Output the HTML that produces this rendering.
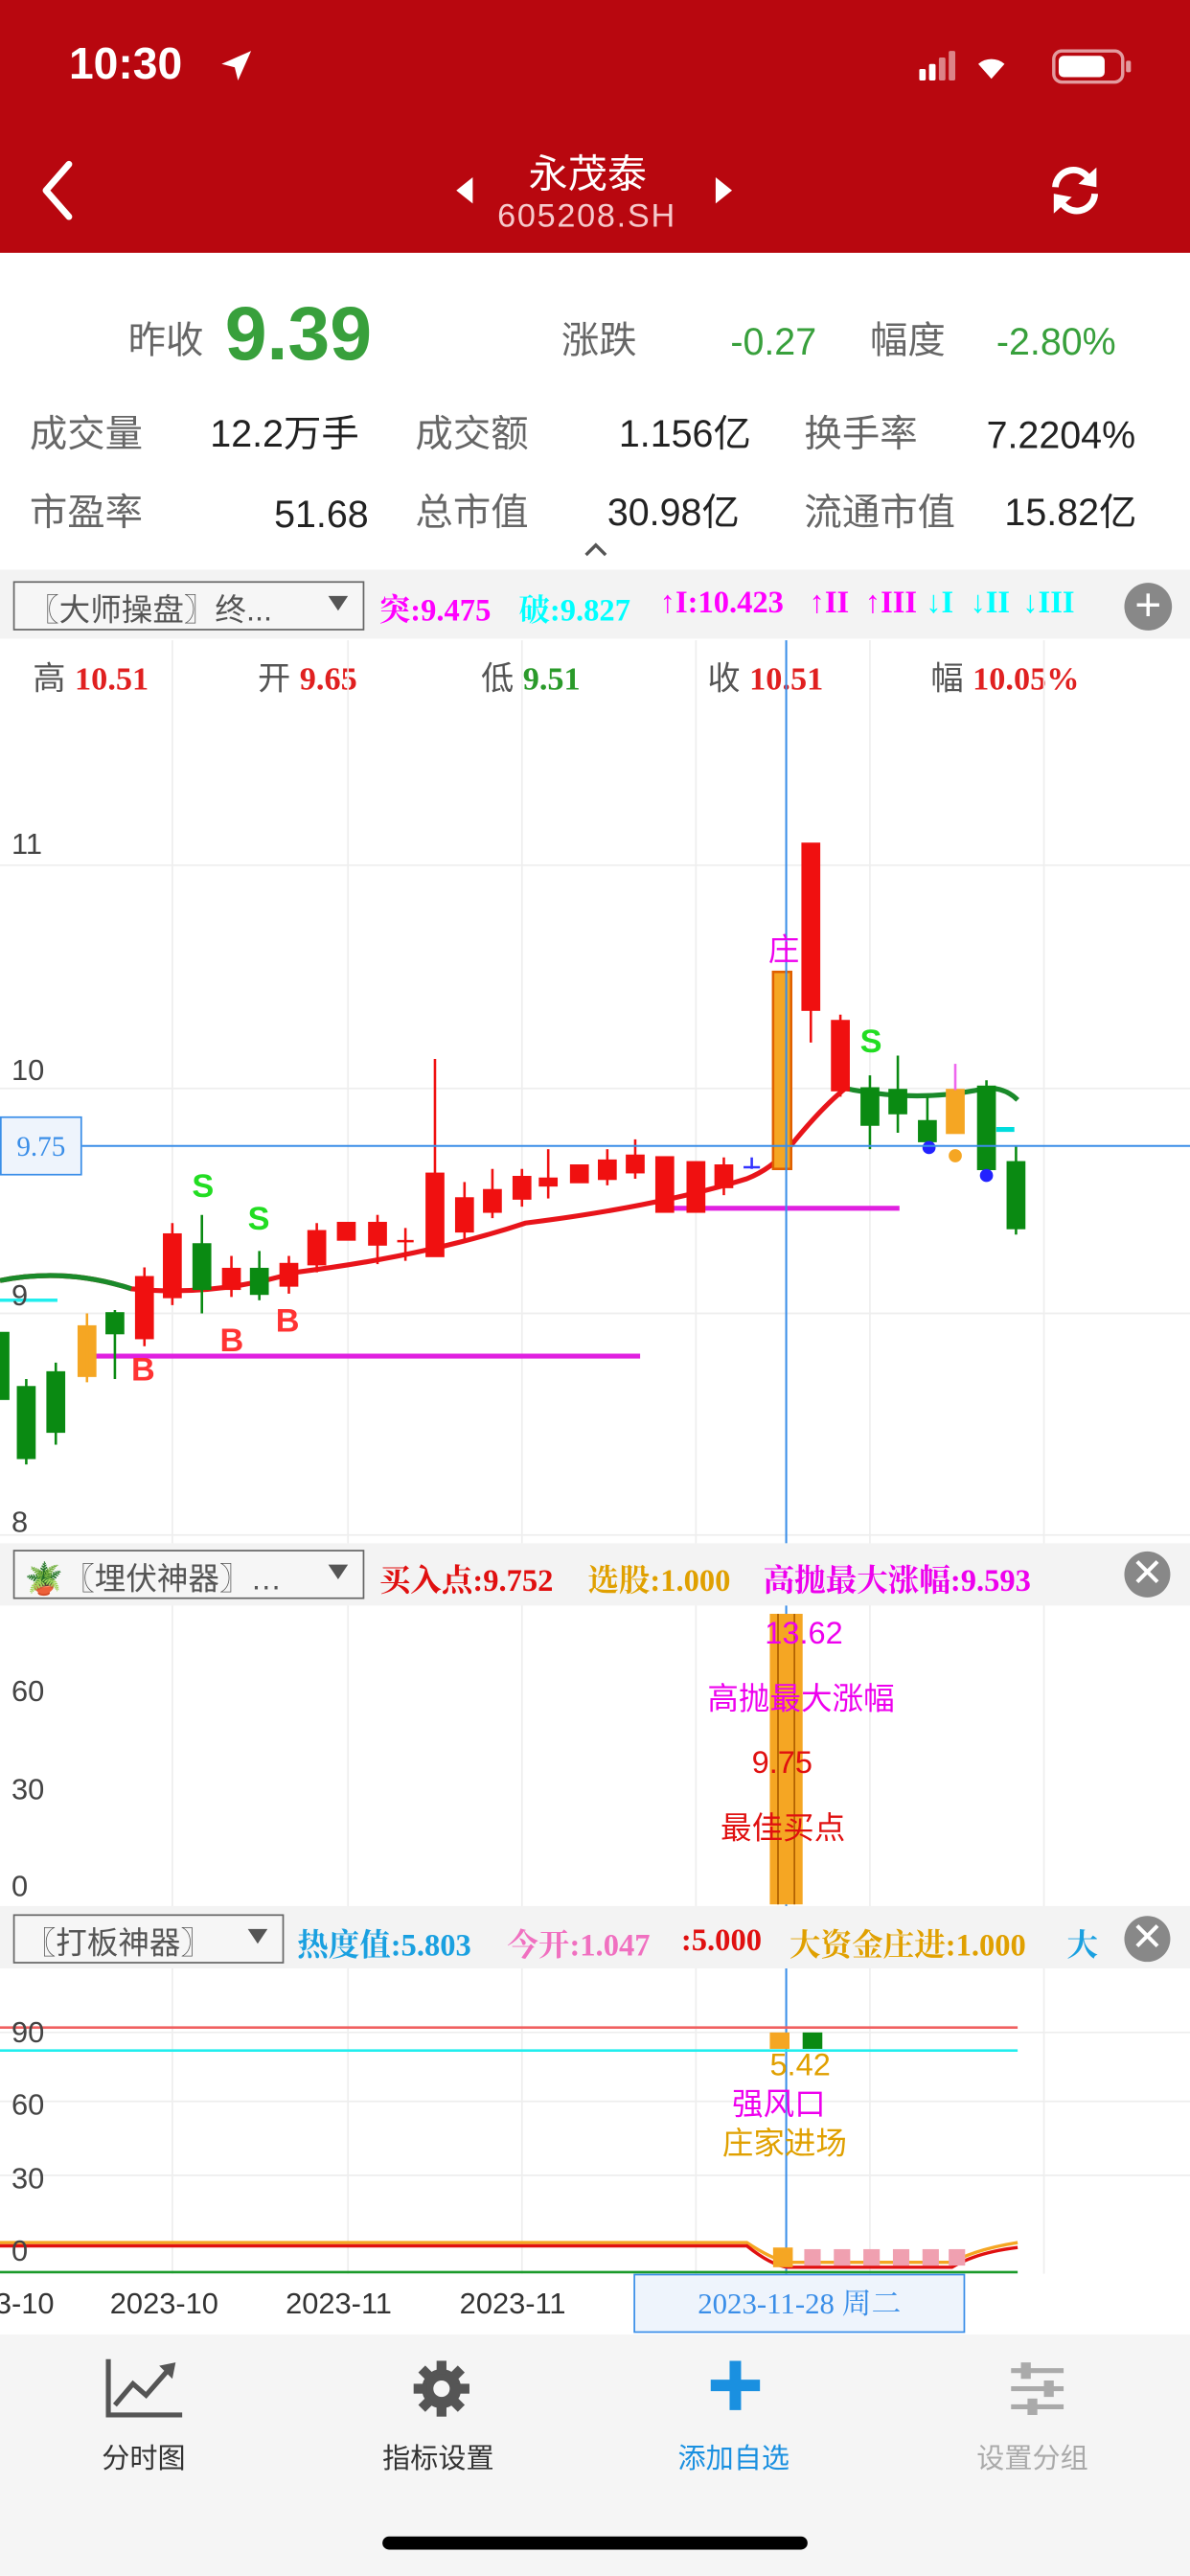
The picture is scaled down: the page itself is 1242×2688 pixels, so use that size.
<!DOCTYPE html>
<html><head><meta charset="utf-8"><style>
*{margin:0;padding:0;box-sizing:border-box}
html,body{width:1242px;height:2688px;overflow:hidden;background:#fff}
#w{position:absolute;left:0;top:0;width:725px;height:1569px;transform:scale(1.71310);transform-origin:0 0;font-family:"Liberation Sans","Noto Sans CJK SC",sans-serif}
.a{position:absolute;white-space:nowrap}
.s{font-family:"Liberation Serif","Noto Serif CJK SC",serif;font-weight:bold}
.g{color:#666}
</style></head><body><div id="w">
<div class="a" style="left:0;top:0;width:725px;height:154px;background:#b8070f"></div>
<div class="a" style="left:42px;top:24px;color:#fff;font-size:27px;font-weight:bold">10:30</div>
<svg class="a" style="left:132px;top:28px" width="24" height="24"><path d="M3 11 L21 3 L13 21 L11 13 Z" fill="#fff"/></svg>
<svg class="a" style="left:560px;top:30px" width="130" height="22"><g fill="#fff"><rect x="0" y="12" width="4" height="7" rx="1"/><rect x="6" y="9" width="4" height="10" rx="1"/><rect x="12" y="5" width="4" height="14" rx="1" opacity=".5"/><rect x="18" y="1" width="4" height="18" rx="1" opacity=".5"/><path d="M44 18 L36 9 A12 12 0 0 1 52 9 Z"/><rect x="82" y="1" width="42" height="19" rx="5" fill="none" stroke="#fff" stroke-width="2" opacity=".6"/><rect x="85" y="4" width="28" height="13" rx="3"/><rect x="126" y="7" width="3" height="7" rx="1" opacity=".6"/></g></svg>
<svg class="a" style="left:20px;top:96px" width="30" height="40"><path d="M22 4 L8 20 L22 36" stroke="#fff" stroke-width="4" fill="none" stroke-linecap="round" stroke-linejoin="round"/></svg>
<div class="a" style="left:322px;top:86px;color:#fff;font-size:24px">永茂泰</div>
<div class="a" style="left:303px;top:121px;color:#f6c9cb;font-size:20px;letter-spacing:1px">605208.SH</div>
<svg class="a" style="left:276px;top:106px" width="14" height="20"><path d="M12 2 L2 10 L12 18Z" fill="#fff"/></svg>
<svg class="a" style="left:434px;top:106px" width="14" height="20"><path d="M2 2 L12 10 L2 18Z" fill="#fff"/></svg>
<svg class="a" style="left:638px;top:100px" width="34" height="32"><g stroke="#fff" stroke-width="4" fill="none"><path d="M5 14 A11 11 0 0 1 26 10"/><path d="M29 18 A11 11 0 0 1 8 22"/></g><path d="M30 2 L30 14 L19 12Z M4 30 L4 18 L15 20Z" fill="#fff"/></svg>

<div class="a g" style="left:78px;top:188px;font-size:23px">昨收</div>
<div class="a" style="left:137px;top:176px;font-size:46px;font-weight:bold;color:#38a03c">9.39</div>
<div class="a g" style="left:342px;top:188px;font-size:23px">涨跌</div>
<div class="a" style="left:445px;top:195px;font-size:23px;color:#38a03c">-0.27</div>
<div class="a g" style="left:530px;top:188px;font-size:23px">幅度</div>
<div class="a" style="left:607px;top:195px;font-size:23px;color:#38a03c">-2.80%</div>
<div class="a g" style="left:18px;top:245px;font-size:23px">成交量</div>
<div class="a" style="left:128px;top:245px;font-size:23px;color:#222">12.2万手</div>
<div class="a g" style="left:253px;top:245px;font-size:23px">成交额</div>
<div class="a" style="left:377px;top:245px;font-size:23px;color:#222">1.156亿</div>
<div class="a g" style="left:490px;top:245px;font-size:23px">换手率</div>
<div class="a" style="left:601px;top:252px;font-size:23px;color:#222">7.2204%</div>
<div class="a g" style="left:18px;top:293px;font-size:23px">市盈率</div>
<div class="a" style="left:167px;top:300px;font-size:23px;color:#222">51.68</div>
<div class="a g" style="left:253px;top:293px;font-size:23px">总市值</div>
<div class="a" style="left:370px;top:293px;font-size:23px;color:#222">30.98亿</div>
<div class="a g" style="left:490px;top:293px;font-size:23px">流通市值</div>
<div class="a" style="left:612px;top:293px;font-size:23px;color:#222">15.82亿</div>
<svg class="a" style="left:355px;top:330px" width="16" height="10"><path d="M2 8 L8 2 L14 8" stroke="#555" stroke-width="2" fill="none"/></svg>

<!-- toolbar 1 -->
<div class="a" style="left:0;top:347px;width:725px;height:42px;background:#f3f3f3"></div>
<div class="a" style="left:8px;top:354px;width:214px;height:30px;border:1px solid #666;background:#f6f6f6;font-size:19px;color:#555;padding:2px 0 0 8px">〖大师操盘〗终...<span style="position:absolute;right:9px;top:8px;border:6px solid transparent;border-top:9px solid #555"></span></div>
<div class="a s" style="left:231px;top:357px;font-size:19px;color:#f0f">突:9.475</div>
<div class="a s" style="left:316px;top:357px;font-size:19px;color:#0ff">破:9.827</div>
<div class="a s" style="left:402px;top:357px;font-size:19px;color:#f0f">↑I:10.423</div>
<div class="a s" style="left:493px;top:357px;font-size:19px;color:#f0f">↑II</div>
<div class="a s" style="left:527px;top:357px;font-size:19px;color:#f0f">↑III</div>
<div class="a s" style="left:564px;top:357px;font-size:19px;color:#0ff">↓I</div>
<div class="a s" style="left:591px;top:357px;font-size:19px;color:#0ff">↓II</div>
<div class="a s" style="left:623px;top:357px;font-size:19px;color:#0ff">↓III</div>
<div class="a" style="left:685px;top:355px;width:29px;height:29px;border-radius:50%;background:#888;color:#fff;font-size:28px;line-height:28px;text-align:center">+</div>

<div class="a" style="left:20px;top:400px;font-size:20px;color:#555;line-height:28px">高 <span class="s" style="color:#e02020">10.51</span></div>
<div class="a" style="left:157px;top:400px;font-size:20px;color:#555;line-height:28px">开 <span class="s" style="color:#e02020">9.65</span></div>
<div class="a" style="left:293px;top:400px;font-size:20px;color:#555;line-height:28px">低 <span class="s" style="color:#2a9a2a">9.51</span></div>
<div class="a" style="left:431px;top:400px;font-size:20px;color:#555;line-height:28px">收 <span class="s" style="color:#e02020">10.51</span></div>
<div class="a" style="left:567px;top:400px;font-size:20px;color:#555;line-height:28px">幅 <span class="s" style="color:#e02020">10.05%</span></div>

<svg class="a" style="left:0;top:0" width="725" height="1569">
<g stroke="#eee" stroke-width="1">
<line x1="105" y1="390" x2="105" y2="1385"/><line x1="212" y1="390" x2="212" y2="1385"/><line x1="318" y1="390" x2="318" y2="1385"/><line x1="424" y1="390" x2="424" y2="1385"/><line x1="530" y1="390" x2="530" y2="1385"/><line x1="636" y1="390" x2="636" y2="1385"/>
<line x1="0" y1="527" x2="725" y2="527"/><line x1="0" y1="663" x2="725" y2="663"/><line x1="0" y1="800" x2="725" y2="800"/><line x1="0" y1="935" x2="725" y2="935"/>
<line x1="0" y1="1238" x2="725" y2="1238"/><line x1="0" y1="1280" x2="725" y2="1280"/><line x1="0" y1="1325" x2="725" y2="1325"/>
</g>
<line x1="48" y1="826" x2="390" y2="826" stroke="#e020e0" stroke-width="3"/>
<line x1="400" y1="736" x2="548" y2="736" stroke="#e020e0" stroke-width="3"/>
<line x1="0" y1="792" x2="35" y2="792" stroke="#2ee" stroke-width="2"/>
<path d="M0 780 Q40 772 80 785 Q130 790 180 775 Q260 765 320 745 Q400 735 455 718 Q470 712 480 700 Q500 675 515 663" stroke="#e8141a" stroke-width="3" fill="none"/>
<path d="M0 780 Q40 772 80 785" stroke="#1a8a2a" stroke-width="3" fill="none"/>
<path d="M515 663 Q560 672 600 663 Q612 662 620 670" stroke="#1a8a2a" stroke-width="3" fill="none"/>
<g stroke-width="1.5">
<g stroke="#0a8a12" fill="#0a8a12">
<rect x="0" y="812" width="5" height="40"/><line x1="16" y1="840" x2="16" y2="892"/><rect x="11" y="845" width="10" height="43"/><line x1="34" y1="830" x2="34" y2="880"/><rect x="29" y="836" width="10" height="36"/>
<line x1="70" y1="798" x2="70" y2="840"/><rect x="65" y="800" width="10" height="12"/><line x1="123" y1="740" x2="123" y2="800"/><rect x="118" y="758" width="10" height="27"/>
<line x1="158" y1="762" x2="158" y2="792"/><rect x="153" y="773" width="10" height="15"/>
<line x1="530" y1="655" x2="530" y2="700"/><rect x="525" y="663" width="10" height="22"/><line x1="547" y1="643" x2="547" y2="690"/><rect x="542" y="664" width="10" height="14"/>
<line x1="565" y1="668" x2="565" y2="700"/><rect x="560" y="683" width="10" height="12"/><line x1="601" y1="658" x2="601" y2="718"/><rect x="596" y="662" width="10" height="50"/>
<line x1="619" y1="698" x2="619" y2="752"/><rect x="614" y="708" width="10" height="40"/>
</g>
<g stroke="#f01010" fill="#f01010">
<line x1="88" y1="772" x2="88" y2="820"/><rect x="83" y="778" width="10" height="37"/><line x1="105" y1="745" x2="105" y2="795"/><rect x="100" y="752" width="10" height="38"/>
<line x1="141" y1="765" x2="141" y2="790"/><rect x="136" y="773" width="10" height="12"/><line x1="176" y1="765" x2="176" y2="788"/><rect x="171" y="770" width="10" height="13"/>
<line x1="193" y1="745" x2="193" y2="775"/><rect x="188" y="750" width="10" height="20"/><rect x="206" y="745" width="10" height="10"/><line x1="230" y1="740" x2="230" y2="770"/><rect x="225" y="745" width="10" height="13"/>
<line x1="247" y1="748" x2="247" y2="768"/><line x1="242" y1="756" x2="252" y2="756"/>
<line x1="265" y1="645" x2="265" y2="765"/><rect x="260" y="715" width="10" height="50"/><line x1="283" y1="720" x2="283" y2="755"/><rect x="278" y="730" width="10" height="20"/>
<line x1="300" y1="712" x2="300" y2="742"/><rect x="295" y="725" width="10" height="13"/><line x1="318" y1="712" x2="318" y2="735"/><rect x="313" y="717" width="10" height="13"/>
<line x1="334" y1="700" x2="334" y2="730"/><rect x="329" y="718" width="10" height="4"/><rect x="348" y="710" width="10" height="10"/>
<line x1="370" y1="700" x2="370" y2="722"/><rect x="365" y="707" width="10" height="11"/><line x1="387" y1="694" x2="387" y2="718"/><rect x="382" y="704" width="10" height="10"/>
<rect x="400" y="705" width="10" height="33"/><rect x="419" y="708" width="10" height="30"/><line x1="441" y1="705" x2="441" y2="728"/><rect x="436" y="710" width="10" height="13"/>
<line x1="494" y1="514" x2="494" y2="635"/><rect x="489" y="514" width="10" height="101"/><line x1="512" y1="618" x2="512" y2="668"/><rect x="507" y="622" width="10" height="42"/>
</g>
<rect x="48" y="808" width="10" height="30" fill="#f5a623" stroke="#f5a623"/><line x1="53" y1="800" x2="53" y2="842" stroke="#f5a623"/>
<rect x="471" y="592" width="11" height="120" fill="#f5a623" stroke="#e06000"/>
<rect x="577" y="664" width="10" height="26" fill="#f5a623" stroke="#f5a623"/><line x1="582" y1="648" x2="582" y2="664" stroke="#e6e"/>
<line x1="458" y1="705" x2="458" y2="712" stroke="#33f"/><line x1="453" y1="711" x2="463" y2="711" stroke="#33f"/>
</g>
<circle cx="566" cy="699" r="4" fill="#22f"/><circle cx="582" cy="704" r="4" fill="#f5a623"/><circle cx="601" cy="716" r="4" fill="#22f"/>
<line x1="607" y1="688" x2="618" y2="688" stroke="#0dd" stroke-width="3"/>
<line x1="479" y1="390" x2="479" y2="1385" stroke="#3a8ee8" stroke-width="1.2"/>
<line x1="0" y1="698" x2="725" y2="698" stroke="#3a8ee8" stroke-width="1.2"/>
<rect x="469" y="983" width="20" height="177" fill="#f5a623"/><line x1="474" y1="983" x2="474" y2="1160" stroke="#b06000"/><line x1="484" y1="983" x2="484" y2="1160" stroke="#b06000"/>
<line x1="0" y1="1235" x2="620" y2="1235" stroke="#f06060" stroke-width="1.5"/>
<line x1="0" y1="1249" x2="620" y2="1249" stroke="#2ee" stroke-width="1.5"/>
<rect x="469" y="1238" width="12" height="10" fill="#f5a623"/><rect x="489" y="1238" width="12" height="10" fill="#0a8a12"/>
<path d="M0 1366 L455 1366 Q470 1376 480 1378 L580 1378 Q595 1370 620 1366" stroke="#f5a623" stroke-width="2" fill="none"/>
<path d="M0 1368 L455 1368 Q470 1380 480 1381 L580 1381 Q595 1372 620 1369" stroke="#e01010" stroke-width="2" fill="none"/>
<g fill="#f0a0b0"><rect x="490" y="1370" width="10" height="10"/><rect x="508" y="1370" width="10" height="10"/><rect x="526" y="1370" width="10" height="10"/><rect x="544" y="1370" width="10" height="10"/><rect x="562" y="1370" width="10" height="10"/><rect x="578" y="1370" width="10" height="10"/></g>
<rect x="471" y="1369" width="12" height="12" fill="#f5a623"/>
<line x1="0" y1="1384" x2="620" y2="1384" stroke="#1a9a2a" stroke-width="1.5"/>
</svg>
<div class="a" style="left:117px;top:712px;font-size:20px;font-weight:bold;color:#2d2">S</div>
<div class="a" style="left:151px;top:732px;font-size:20px;font-weight:bold;color:#2d2">S</div>
<div class="a" style="left:524px;top:624px;font-size:20px;font-weight:bold;color:#2d2">S</div>
<div class="a" style="left:80px;top:824px;font-size:20px;font-weight:bold;color:#f33">B</div>
<div class="a" style="left:134px;top:806px;font-size:20px;font-weight:bold;color:#f33">B</div>
<div class="a" style="left:168px;top:794px;font-size:20px;font-weight:bold;color:#f33">B</div>
<div class="a" style="left:468px;top:564px;font-size:19px;color:#e0e">庄</div>
<div class="a" style="left:7px;top:504px;font-size:18px;color:#444">11</div>
<div class="a" style="left:7px;top:642px;font-size:18px;color:#444">10</div>
<div class="a" style="left:7px;top:779px;font-size:18px;color:#444">9</div>
<div class="a" style="left:7px;top:917px;font-size:18px;color:#444">8</div>
<div class="a s" style="left:0;top:680px;width:50px;height:36px;border:1px solid #3a8ee8;background:#eef4fc;color:#3a8ee8;font-size:17px;font-weight:normal;text-align:center;line-height:36px">9.75</div>

<div class="a" style="left:0;top:940px;width:725px;height:38px;background:#f3f3f3"></div>
<div class="a" style="left:8px;top:944px;width:214px;height:30px;border:1px solid #666;background:#f6f6f6;font-size:19px;color:#555;padding:2px 0 0 6px">🪴〖埋伏神器〗…<span style="position:absolute;right:9px;top:8px;border:6px solid transparent;border-top:9px solid #555"></span></div>
<div class="a s" style="left:231px;top:948px;font-size:19px;color:#e01010">买入点:9.752</div>
<div class="a s" style="left:358px;top:948px;font-size:19px;color:#e0a000">选股:1.000</div>
<div class="a s" style="left:465px;top:948px;font-size:19px;color:#e0e">高抛最大涨幅:9.593</div>
<div class="a" style="left:685px;top:945px;width:28px;height:28px;border-radius:50%;background:#888;color:#fff;font-size:24px;line-height:28px;text-align:center">✕</div>
<div class="a" style="left:466px;top:985px;font-size:19px;color:#e0e">13.62</div>
<div class="a" style="left:431px;top:1020px;font-size:19px;color:#e0e">高抛最大涨幅</div>
<div class="a" style="left:458px;top:1064px;font-size:19px;color:#e01010">9.75</div>
<div class="a" style="left:439px;top:1099px;font-size:19px;color:#e01010">最佳买点</div>
<div class="a" style="left:7px;top:1020px;font-size:18px;color:#444">60</div>
<div class="a" style="left:7px;top:1080px;font-size:18px;color:#444">30</div>
<div class="a" style="left:7px;top:1139px;font-size:18px;color:#444">0</div>

<div class="a" style="left:0;top:1161px;width:725px;height:38px;background:#f3f3f3"></div>
<div class="a" style="left:8px;top:1166px;width:165px;height:30px;border:1px solid #666;background:#f6f6f6;font-size:19px;color:#555;padding:2px 0 0 6px">〖打板神器〗<span style="position:absolute;right:9px;top:8px;border:6px solid transparent;border-top:9px solid #555"></span></div>
<div class="a s" style="left:181px;top:1170px;font-size:19px;color:#1aa0e0">热度值:5.803</div>
<div class="a s" style="left:309px;top:1170px;font-size:19px;color:#f070c0">今开:1.047</div>
<div class="a s" style="left:415px;top:1172px;font-size:19px;color:#e01010">:5.000</div>
<div class="a s" style="left:481px;top:1170px;font-size:19px;color:#e0a000">大资金庄进:1.000</div>
<div class="a s" style="left:650px;top:1170px;font-size:19px;color:#1aa0e0">大</div>
<div class="a" style="left:685px;top:1167px;width:28px;height:28px;border-radius:50%;background:#888;color:#fff;font-size:24px;line-height:28px;text-align:center">✕</div>
<div class="a" style="left:469px;top:1248px;font-size:19px;color:#e0a000">5.42</div>
<div class="a" style="left:446px;top:1267px;font-size:19px;color:#e0e">强风口</div>
<div class="a" style="left:440px;top:1291px;font-size:19px;color:#e0a000">庄家进场</div>
<div class="a" style="left:7px;top:1228px;font-size:18px;color:#444">90</div>
<div class="a" style="left:7px;top:1272px;font-size:18px;color:#444">60</div>
<div class="a" style="left:7px;top:1317px;font-size:18px;color:#444">30</div>
<div class="a" style="left:7px;top:1361px;font-size:18px;color:#444">0</div>

<div class="a" style="left:-3px;top:1393px;font-size:18px;color:#333">3-10</div>
<div class="a" style="left:67px;top:1393px;font-size:18px;color:#333">2023-10</div>
<div class="a" style="left:174px;top:1393px;font-size:18px;color:#333">2023-11</div>
<div class="a" style="left:280px;top:1393px;font-size:18px;color:#333">2023-11</div>
<div class="a" style="left:386px;top:1385px;width:202px;height:36px;border:1px solid #3a8ee8;background:#eef4fc;color:#3a8ee8;font-size:18px;text-align:center;line-height:34px;font-family:'Liberation Serif','Noto Serif CJK SC',serif">2023-11-28 周二</div>

<div class="a" style="left:0;top:1422px;width:725px;height:147px;background:#f5f5f5"></div>
<svg class="a" style="left:63px;top:1435px" width="50" height="40"><path d="M3 2 L3 36 L48 36" stroke="#555" stroke-width="3" fill="none"/><path d="M7 30 L18 17 L26 24 L40 8" stroke="#555" stroke-width="3" fill="none"/><path d="M34 6 L44 4 L42 14Z" fill="#555"/></svg>
<div class="a" style="left:62px;top:1483px;font-size:17px;color:#333">分时图</div>
<svg class="a" style="left:251px;top:1437px" width="36" height="36" viewBox="0 0 36 36"><g fill="#555"><circle cx="18" cy="18" r="12"/><g id="t"><rect x="15" y="1" width="6" height="8"/><rect x="15" y="27" width="6" height="8"/><rect x="1" y="15" width="8" height="6"/><rect x="27" y="15" width="8" height="6"/></g><use href="#t" transform="rotate(45 18 18)"/></g><circle cx="18" cy="18" r="5" fill="#f5f5f5"/></svg>
<div class="a" style="left:233px;top:1483px;font-size:17px;color:#333">指标设置</div>
<svg class="a" style="left:431px;top:1436px" width="34" height="34"><path d="M17 2 V32 M2 17 H32" stroke="#1a90e0" stroke-width="7"/></svg>
<div class="a" style="left:413px;top:1483px;font-size:17px;color:#1a90e0">添加自选</div>
<svg class="a" style="left:614px;top:1438px" width="36" height="34"><g stroke="#aaa" stroke-width="3"><line x1="2" y1="6" x2="34" y2="6"/><line x1="2" y1="17" x2="34" y2="17"/><line x1="2" y1="28" x2="34" y2="28"/></g><g fill="#aaa"><rect x="8" y="1" width="6" height="10"/><rect x="22" y="12" width="6" height="10"/><rect x="12" y="23" width="6" height="10"/></g></svg>
<div class="a" style="left:595px;top:1483px;font-size:17px;color:#aaa">设置分组</div>
<div class="a" style="left:233px;top:1545px;width:259px;height:8px;border-radius:4px;background:#000"></div>
</div></body></html>
